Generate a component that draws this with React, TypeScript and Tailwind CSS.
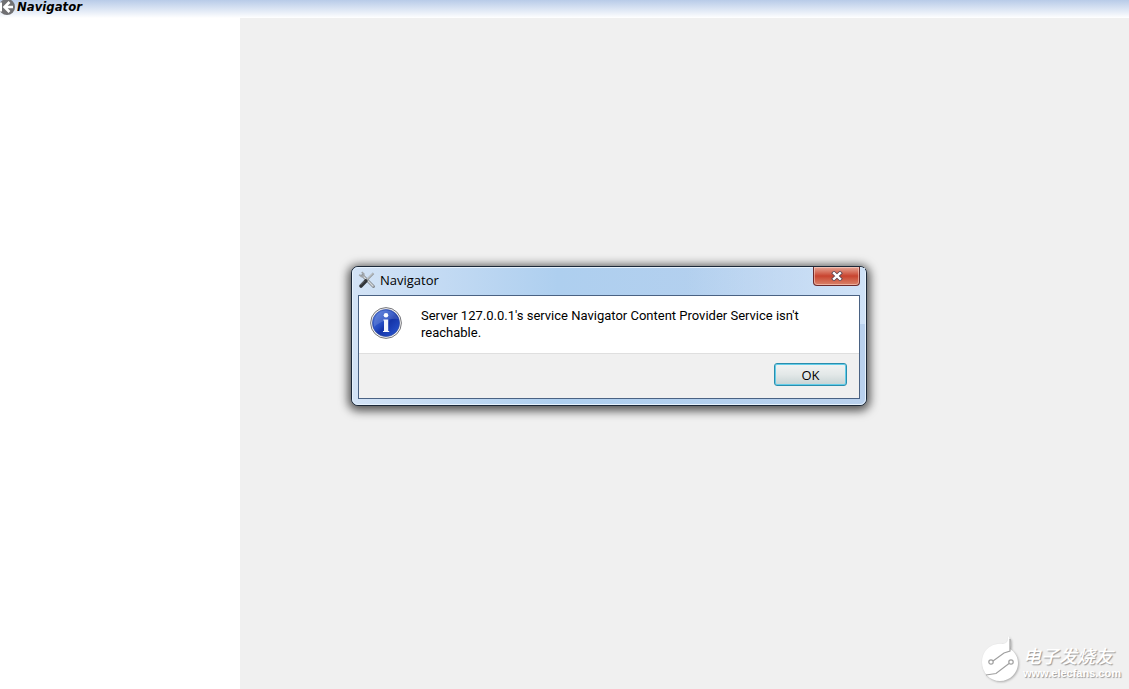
function BackIcon() {
  return (
    <svg viewBox="0 0 16 16" className="h-4 w-4" aria-hidden="true">
      <circle cx="7" cy="7" r="8" fill="#707073" />
      <path d="M1 2.5v9" stroke="#fff" strokeWidth="2" />
      <path d="M13 7H5M9.5 2L4.5 7L9.5 12" fill="none" stroke="#fff" strokeWidth="2.6" />
    </svg>
  );
}

function ToolsIcon() {
  return (
    <svg viewBox="0 0 18 18" className="h-[18px] w-[18px]" aria-hidden="true">
      <path d="M4.5 4.5L15.5 15.5" stroke="#858b92" strokeWidth="3" strokeLinecap="round" />
      <path d="M5 5L15 15" stroke="#d5d9dd" strokeWidth="1.4" strokeLinecap="round" />
      <path d="M1.3 3.6L3.4 5.6L5.4 4.8L5.8 3L3.7 1.1" fill="none" stroke="#a0a5aa" strokeWidth="1.7" />
      <path d="M15.5 2.3L8 9.8" stroke="#8e9398" strokeWidth="2" />
      <path d="M15.2 2.2L8 9.4" stroke="#dde0e3" strokeWidth="0.9" />
      <path d="M7.8 10L3 15" stroke="#303438" strokeWidth="3.6" strokeLinecap="round" />
      <path d="M6.6 9.8L2.4 14" stroke="#777c82" strokeWidth="0.9" />
    </svg>
  );
}

function InfoIcon() {
  return (
    <svg viewBox="0 0 32 32" className="h-8 w-8 shrink-0" aria-hidden="true">
      <defs>
        <linearGradient id="info-fill" x1="0" y1="0" x2="1" y2="1">
          <stop offset="0" stopColor="#5a80de" />
          <stop offset="0.45" stopColor="#2249c0" />
          <stop offset="0.55" stopColor="#1534a8" />
          <stop offset="1" stopColor="#2c5bd6" />
        </linearGradient>
      </defs>
      <circle cx="16" cy="16" r="15.4" fill="#f4f4f4" stroke="#77777c" strokeWidth="1" />
      <circle cx="16" cy="16" r="13.6" fill="url(#info-fill)" stroke="#2a459c" strokeWidth="0.6" />
      <path d="M4 20C3 9 9 3.5 16 3.5S27 8 28 12C21 11 11 14 4 20Z" fill="#fff" opacity="0.14" />
      <circle cx="16" cy="8.3" r="2.3" fill="#fff" />
      <path d="M13.4 12.5h4.8v11.4h1V25H13v-1.1h1V13.6h-.6z" fill="#f3f5fb" />
    </svg>
  );
}

function CloseIcon() {
  return (
    <svg viewBox="0 0 12 10" className="h-[10px] w-3" aria-hidden="true">
      <path d="M3 2.2L9 7.8M9 2.2L3 7.8" stroke="#5b4450" strokeWidth="4" strokeLinecap="square" />
      <path d="M3 2.2L9 7.8M9 2.2L3 7.8" stroke="#fff" strokeWidth="2.4" strokeLinecap="square" />
    </svg>
  );
}

function BrandMark() {
  return (
    <svg viewBox="0 0 40 48" className="h-12 w-10 drop-shadow-[1px_1px_1px_#aaaaaa]" aria-hidden="true">
      <path
        d="M27 1C27 7 26 8 22 9C10 7 1 16 1 27S9 46 19 46S37 38 37 28C37 22 34 17 29 14C30 10 30 5 27 1Z"
        fill="#fff"
      />
      <g fill="none" stroke="#a0a0a0" strokeWidth="1.2">
        <circle cx="10" cy="27" r="2.2" />
        <path d="M12 26L23 18L29 16V4" />
        <circle cx="30" cy="27" r="2.2" />
        <path d="M28 28.5L15 38.5L5 40" />
      </g>
    </svg>
  );
}

function MessageDialog() {
  return (
    <div
      role="alertdialog"
      aria-labelledby="dialog-title"
      aria-describedby="dialog-message"
      className="absolute top-[266px] left-[351px] w-[516px] rounded-[7px] border border-[#1b2838] bg-[#b9d1ee] px-[6px] pb-[6px] shadow-[0_2px_10px_3px_rgba(0,0,0,0.65)]"
    >
      <div className="absolute inset-0 rounded-[6px] border border-[#e6f2fd] bg-linear-to-r from-[#d3e3f6] from-0% via-[#aecfef] via-40% to-[#b9d1ee]" />
      <div className="absolute inset-x-px top-px h-14 bg-linear-to-r from-transparent from-65% to-[#cfe2f7]" />
      <div className="relative flex h-7 items-start justify-between">
        <div className="flex items-center gap-1 pt-1">
          <ToolsIcon />
          <h2 id="dialog-title" className="text-[13px] leading-[18px]">
            Navigator
          </h2>
        </div>
        <button
          aria-label="Close"
          className="flex h-[19px] w-[47px] items-center justify-center rounded-b-[4px] border border-t-0 border-[#6b2a2c] bg-linear-to-b from-[#e5a596] from-0% via-[#c8432f] via-50% to-[#d98269] shadow-[inset_0_0_0_1px_rgba(255,225,215,0.5)]"
        >
          <CloseIcon />
        </button>
      </div>
      <div className="relative border border-[#4a6283] bg-[#f0f0f0]">
        <div className="flex h-[58px] items-start gap-[19px] border-b border-[#dfdfdf] bg-white px-[11px] pt-[11px]">
          <InfoIcon />
          <p id="dialog-message" className="font-['Roboto',sans-serif] text-[13px] leading-[17px]">
            Server 127.0.0.1's service Navigator Content Provider Service isn't
            <br />
            reachable.
          </p>
        </div>
        <div className="flex justify-end px-3 pt-[9px] pb-3">
          <button className="h-[23px] w-[73px] rounded-[3px] border border-[#2a8dad] bg-linear-to-b from-[#f1f3f3] from-0% via-[#e3e8e8] via-50% to-[#c6d3d4] text-[13px] leading-5 shadow-[inset_0_0_0_1px_#62cde9]">
            OK
          </button>
        </div>
      </div>
    </div>
  );
}

export default function App() {
  return (
    <div className="relative flex min-h-screen flex-col overflow-hidden bg-[#f0f0f0] font-['Open_Sans','Noto_Sans_CJK_SC',sans-serif] text-black">
      <header className="flex h-[18px] items-start bg-linear-to-b from-[#b8cbe8] to-white">
        <BackIcon />
        <h1 className="pl-px font-['DejaVu_Sans_Condensed','DejaVu_Sans',sans-serif] text-[13px] leading-[14px] font-bold italic">
          Navigator
        </h1>
      </header>
      <div className="flex flex-1">
        <aside className="w-60 bg-white" />
        <main className="flex flex-1 items-end justify-end pr-2 pb-[6px]">
          <div className="flex items-center gap-[2px] text-white">
            <BrandMark />
            <div className="pt-2 [text-shadow:1px_1px_1px_#999999]">
              <p className="font-['Noto_Sans_CJK_SC',sans-serif] text-[18px] leading-5 font-medium italic">
                电子发烧友
              </p>
              <p className="font-['Liberation_Sans',sans-serif] text-[11px] leading-4 font-bold">
                www.elecfans.com
              </p>
            </div>
          </div>
        </main>
      </div>
      <MessageDialog />
    </div>
  );
}
